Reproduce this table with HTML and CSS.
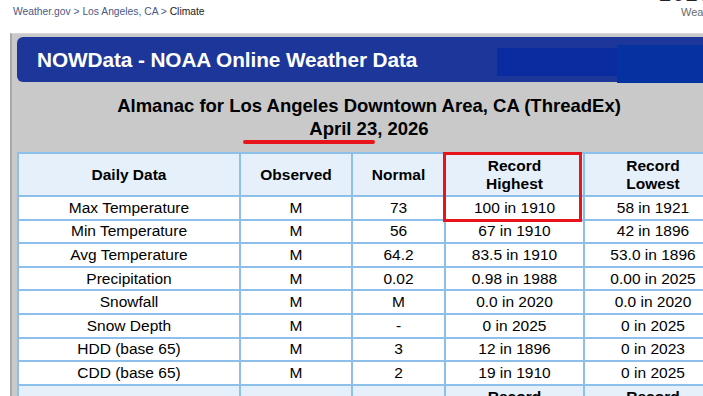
FILE: index.html
```html
<!DOCTYPE html>
<html lang="en">
<head>
<meta charset="utf-8">
<title>NOWData - Climate</title>
<link rel="stylesheet" href="styles.css">
</head>
<body>
<div class="page">
  <div class="topbar">
    <div class="crumbs"><a href="#">Weather.gov</a> &gt; <a href="#">Los Angeles, CA</a> &gt; <span class="here">Climate</span></div>
    <div class="corner">
      <div class="corner-big">2026</div>
      <div class="corner-small">Weather</div>
    </div>
  </div>
  <div class="panel">
    <div class="banner">
      <span class="banner-title">NOWData - NOAA Online Weather Data</span>
      <span class="mask mask-a"></span>
      <span class="mask mask-b"></span>
    </div>
    <div class="content">
      <h2 class="title">Almanac for Los Angeles Downtown Area, CA (ThreadEx)<br>April 23, 2026</h2>
      <span class="mark-underline"></span>
      <span class="mark-box"></span>
      <table class="almanac">
        <colgroup>
          <col class="c1"><col class="c2"><col class="c3"><col class="c4"><col class="c5">
        </colgroup>
        <thead>
          <tr><th>Daily Data</th><th>Observed</th><th>Normal</th><th>Record<br>Highest</th><th>Record<br>Lowest</th></tr>
        </thead>
        <tbody>
          <tr><td>Max Temperature</td><td>M</td><td>73</td><td>100 in 1910</td><td>58 in 1921</td></tr>
          <tr><td>Min Temperature</td><td>M</td><td>56</td><td>67 in 1910</td><td>42 in 1896</td></tr>
          <tr><td>Avg Temperature</td><td>M</td><td>64.2</td><td>83.5 in 1910</td><td>53.0 in 1896</td></tr>
          <tr><td>Precipitation</td><td>M</td><td>0.02</td><td>0.98 in 1988</td><td>0.00 in 2025</td></tr>
          <tr><td>Snowfall</td><td>M</td><td>M</td><td>0.0 in 2020</td><td>0.0 in 2020</td></tr>
          <tr><td>Snow Depth</td><td>M</td><td>-</td><td>0 in 2025</td><td>0 in 2025</td></tr>
          <tr><td>HDD (base 65)</td><td>M</td><td>3</td><td>12 in 1896</td><td>0 in 2023</td></tr>
          <tr><td>CDD (base 65)</td><td>M</td><td>2</td><td>19 in 1910</td><td>0 in 2025</td></tr>
          <tr class="subhead"><th>Month-to-Date</th><th>Observed</th><th>Normal</th><th>Record<br>Highest</th><th>Record<br>Lowest</th></tr>
        </tbody>
      </table>
    </div>
  </div>
</div>
</body>
</html>
```
FILE: styles.css
```css
html, body {
  margin: 0;
  padding: 0;
  background: #ffffff;
}
body {
  width: 703px;
  height: 396px;
  overflow: hidden;
  font-family: "Liberation Sans", Arial, sans-serif;
  color: #000;
}
.page {
  width: 740px;
}
.topbar {
  display: flex;
  justify-content: space-between;
  align-items: flex-start;
  width: 703px;
  height: 33px;
  overflow: hidden;
}
.crumbs {
  padding: 5px 0 0 13px;
  font-size: 10.3px;
  line-height: 14px;
  color: #4a5a86;
}
.crumbs a {
  color: #4a5a86;
  text-decoration: none;
}
.crumbs .here {
  color: #222;
}
.corner {
  display: flex;
  flex-direction: column;
  align-items: flex-start;
  width: 43px;
  flex: none;
  white-space: nowrap;
}
.corner-big {
  margin-top: -17px;
  margin-left: -1px;
  font-size: 22px;
  line-height: 22px;
  color: #222;
  letter-spacing: 1px;
}
.corner-small {
  margin-top: 1px;
  margin-left: 21px;
  font-size: 11px;
  line-height: 12px;
  color: #6a6a6a;
}
.panel {
  margin-left: 10px;
  padding: 3px 0 0 5px;
  background: #c9c9c9;
  border-left: 2px solid #a9a9a9;
  border-top: 1px solid #d9d9d9;
  height: 380px;
}
.banner {
  position: relative;
  display: flex;
  align-items: center;
  width: 686px;
  height: 45px;
  padding-left: 20px;
  box-sizing: border-box;
  background: #1c3799;
  border-radius: 6px 0 0 6px;
}
.banner-title {
  color: #ffffff;
  font-weight: bold;
  font-size: 20.8px;
  letter-spacing: -0.1px;
  white-space: nowrap;
}
.mask {
  position: absolute;
}
.mask-a {
  left: 480px;
  top: 11px;
  width: 120px;
  height: 28px;
  background: #0b2ba0;
}
.mask-b {
  left: 600px;
  top: 8px;
  width: 86px;
  height: 38px;
  background: #0532a1;
}
.content {
  position: relative;
  width: 704px;
}
.title {
  margin: 0;
  padding: 13px 0 12px;
  text-align: center;
  font-size: 18.5px;
  line-height: 22.5px;
  font-weight: bold;
}
.mark-underline {
  position: absolute;
  left: 226px;
  top: 58px;
  width: 132px;
  height: 4px;
  background: #e8141b;
  border-radius: 2px;
}
.mark-box {
  position: absolute;
  left: 426px;
  top: 70px;
  width: 133px;
  height: 64px;
  border: 3px solid #e8141b;
  z-index: 2;
}
.almanac {
  border-collapse: collapse;
  width: 704px;
  table-layout: fixed;
  background: #ffffff;
  font-size: 15.5px;
}
.c1 { width: 222px; }
.c2 { width: 112px; }
.c3 { width: 93px; }
.c4 { width: 139px; }
.c5 { width: 138px; }
.almanac th,
.almanac td {
  border: 2px solid #8cc0ea;
  text-align: center;
  padding: 0;
}
.almanac th {
  background: #e6f0fb;
  font-weight: bold;
  height: 41px;
  line-height: 18px;
}
.almanac td {
  height: 21.6px;
  line-height: 18px;
}
```
